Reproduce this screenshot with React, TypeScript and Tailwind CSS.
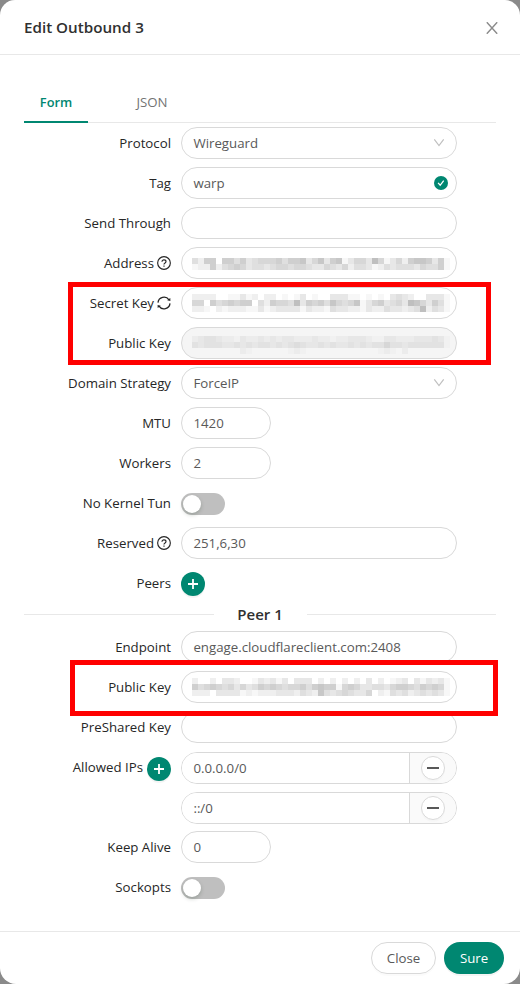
import type { ReactNode } from "react";

// Each digit is the darkness of one 6px block of a censored value.
const ADDRESS = [
  "426606646345556" + "4667357367135538513526776361",
  "122624565344345" + "5455433543524431243444354461",
];
const SECRET = [
  "222200113120220" + "1013010033311010103432003331",
  "550645656604265" + "5483656475457135634538753641",
  "221021222113123" + "3331322143322132243323482431",
];
const PUBLIC = [
  "234432213223232" + "3322232212233321133222333431",
  "434443343434434" + "3454334343343434464434444441",
  "000000002100000" + "0121000000000000121020000000",
];
const PEER_PUBLIC = [
  "200203320013231" + "3033302020202030201230313231",
  "645654535346565" + "4556467661565334435665465651",
  "222033331212223" + "3324327434543350214342343431",
];

const SHADES = ["none", "#f7f7f7", "#efefef", "#e7e7e7", "#dfdfdf", "#d7d7d7", "#cfcfcf", "#c7c7c7", "#bfbfbf"];
const MUTED_SHADES = ["none", "#f1f1f1", "#ececec", "#e7e7e7", "#e2e2e2", "#dddddd", "#d7d7d7", "#d0d0d0", "#cccccc"];

function Mosaic({ rows, muted = false, offset = "" }: { rows: string[]; muted?: boolean; offset?: string }) {
  const shades = muted ? MUTED_SHADES : SHADES;
  return (
    <svg width="258" height={rows.length * 6} shapeRendering="crispEdges" className={`-ml-0.5 shrink-0 ${offset}`}>
      {rows.map((row, y) =>
        row.split("").map((d, x) => (
          <rect key={`${x}-${y}`} x={x * 6} y={y * 6} width="6" height="6" fill={shades[Number(d)]} />
        )),
      )}
    </svg>
  );
}

function Row({ label, icon, children, labelPad = "pt-0.5" }: { label?: string; icon?: ReactNode; children: ReactNode; labelPad?: string }) {
  return (
    <div className="flex h-8 items-center gap-2.5">
      <div className="flex w-[147px] shrink-0 items-center justify-end gap-[3px] whitespace-nowrap text-[#262626]">
        {label && <span className={labelPad}>{label}</span>}
        {icon}
      </div>
      {children}
    </div>
  );
}

function Field({ text, children, className = "w-[276px]", bg = "bg-white" }: { text?: string; children?: ReactNode; className?: string; bg?: string }) {
  return (
    <div className={`flex h-8 shrink-0 items-center whitespace-nowrap rounded-full border border-[#d9d9d9] pl-3 ${className} ${bg}`}>
      {text && <span className="-ml-[0.6px] pt-0.5">{text}</span>}
      {children}
    </div>
  );
}

const Help = () => (
  <svg width="14" height="14" viewBox="0 0 14 14" fill="none" stroke="#262626" strokeWidth="1.15">
    <circle cx="7" cy="7" r="6.35" />
    <path d="M5 5.7C5 4.5 5.8 3.8 7 3.8s2 .7 2 1.8c0 .9-.6 1.3-1.2 1.6-.6.3-.8.6-.8 1.3" />
    <path d="M7 9.5v1.2" />
  </svg>
);

const Sync = () => (
  <svg width="14" height="14" viewBox="0 0 14 14" fill="none" stroke="#262626" strokeWidth="1.3">
    <path d="M1 6.6A6 6 0 0 1 12 3.9M13 7.4A6 6 0 0 1 2 10.1" />
    <path d="m10.2 4.3 3.2.7-.1-3ZM3.8 9.7.6 9l.1 3Z" fill="#262626" stroke="none" />
  </svg>
);

const Chevron = () => (
  <svg className="ml-auto mr-[11px]" width="12" height="12" viewBox="0 0 12 12" fill="none" stroke="#bfbfbf" strokeWidth="1.2">
    <path d="m1.3 2.3 4.7 6.2 4.7-6.2" />
  </svg>
);

const AddButton = () => (
  <div className="mt-0.5 flex size-6 items-center justify-center rounded-full bg-[#008771] shadow-[0_2px_0_rgba(0,0,0,0.045)]">
    <svg width="12" height="12" viewBox="0 0 12 12" stroke="#fff" strokeWidth="1.8">
      <path d="M6 1v10M1 6h10" />
    </svg>
  </div>
);

const Toggle = () => (
  <div className="mt-0.5 flex h-[22px] w-11 items-center rounded-full bg-[#bfbfbf] p-0.5">
    <div className="size-[18px] rounded-full bg-white shadow-[0_2px_4px_rgba(0,35,11,0.2)]" />
  </div>
);

function AllowedIp({ value }: { value: string }) {
  return (
    <div className="flex h-8 w-[276px] overflow-hidden rounded-full border border-[#d9d9d9]">
      <div className="flex w-[228px] items-center border-r border-[#d9d9d9] bg-white pl-3">
        <span className="-ml-[0.6px] pt-0.5">{value}</span>
      </div>
      <div className="flex flex-1 items-center justify-center bg-[#fafafa]">
        <div className="flex size-6 items-center justify-center rounded-full border border-[#d9d9d9] bg-white shadow-[0_2px_0_rgba(0,0,0,0.015)]">
          <div className="h-0.5 w-3 bg-[#595959]" />
        </div>
      </div>
    </div>
  );
}

export default function App() {
  return (
    <div className="h-[984px] w-[520px] bg-[#8a8a8a] text-[13.25px] text-[#595959]" style={{ fontFamily: '"Open Sans", "Noto Sans", sans-serif' }}>
      <div className="relative flex h-full flex-col overflow-hidden rounded-b-2xl rounded-t-[15px] bg-white">
        <header className="flex h-[55px] shrink-0 items-center justify-between border-b border-[#e8e8e8] pl-6 pr-[22px]">
          <h1 className="text-[15.2px] font-semibold text-[#303030]">Edit Outbound 3</h1>
          <svg className="mt-0.5" width="12" height="12" viewBox="0 0 12 12" fill="none" stroke="#8c8c8c" strokeWidth="1.4">
            <path d="m.8.2 10.4 11.6M11.2.2.8 11.8" />
          </svg>
        </header>

        <main className="flex-1 px-6 pt-7">
          <nav className="flex h-10 border-b border-[#e8e8e8]">
            <div className="-mb-px flex w-16 items-center justify-center border-b-2 border-[#008771] pt-0.5 text-[12.8px] font-semibold text-[#008771]">Form</div>
            <div className="ml-8 flex w-16 items-center justify-center pt-px text-[#737373]">JSON</div>
          </nav>

          <section className="mt-1 flex flex-col gap-2">
            <Row label="Protocol"><Field text="Wireguard"><Chevron /></Field></Row>
            <Row label="Tag">
              <Field text="warp">
                <svg className="ml-auto mr-[8px]" width="14" height="14" viewBox="0 0 14 14">
                  <circle cx="7" cy="7" r="7" fill="#008771" />
                  <path d="m4.1 6.9 2.1 2.4 3.5-4.6" fill="none" stroke="#fff" strokeWidth="1.3" />
                </svg>
              </Field>
            </Row>
            <Row label="Send Through"><Field /></Row>
            <Row label="Address" icon={<Help />}><Field><Mosaic rows={ADDRESS} offset="mt-0.5" /></Field></Row>
            <Row label="Secret Key" icon={<Sync />}><Field><Mosaic rows={SECRET} /></Field></Row>
            <Row label="Public Key"><Field bg="bg-[#f5f5f5]"><Mosaic rows={PUBLIC} muted offset="mt-1" /></Field></Row>
            <Row label="Domain Strategy"><Field text="ForceIP"><Chevron /></Field></Row>
            <Row label="MTU"><Field className="w-[90px]" text="1420" /></Row>
            <Row label="Workers"><Field className="w-[90px]" text="2" /></Row>
            <Row label="No Kernel Tun"><Toggle /></Row>
            <Row label="Reserved" icon={<Help />}><Field text="251,6,30" /></Row>
            <Row label="Peers"><AddButton /></Row>
          </section>

          <div className="mt-[3px] flex h-6 items-center gap-6">
            <div className="h-px flex-1 bg-[#e8e8e8]" />
            <div className="flex w-[45px] justify-center whitespace-nowrap pt-px text-[15px] font-semibold text-[#303030]">Peer 1</div>
            <div className="h-px flex-1 bg-[#e8e8e8]" />
          </div>

          <section className="mt-[5px] flex flex-col gap-2">
            <Row label="Endpoint"><Field text="engage.cloudflareclient.com:2408" /></Row>
            <Row label="Public Key"><Field><Mosaic rows={PEER_PUBLIC} /></Field></Row>
            <Row label="PreShared Key"><Field /></Row>
            <div className="mt-px flex flex-col gap-2">
              <Row label="Allowed IPs" icon={<AddButton />} labelPad="pr-px"><AllowedIp value="0.0.0.0/0" /></Row>
              <Row><AllowedIp value="::/0" /></Row>
            </div>
            <div className="-mt-px flex flex-col gap-2">
              <Row label="Keep Alive"><Field className="w-[90px]" text="0" /></Row>
              <Row label="Sockopts"><Toggle /></Row>
            </div>
          </section>
        </main>

        <footer className="flex h-[53px] shrink-0 justify-end gap-2 border-t border-[#e8e8e8] pr-4 pt-2.5">
          <div className="flex h-8 w-[65px] items-center justify-center rounded-full border border-[#d9d9d9] pt-0.5 shadow-[0_2px_0_rgba(0,0,0,0.015)]">Close</div>
          <div className="flex h-8 w-[60px] items-center justify-center rounded-full bg-[#008771] pt-0.5 text-white shadow-[0_2px_0_rgba(0,0,0,0.045)]">Sure</div>
        </footer>

        <div className="absolute left-[68px] top-[282px] h-[83px] w-[423px] border-[5px] border-[#ff0000]" />
        <div className="absolute left-[70px] top-[660px] h-14 w-[428px] border-[5px] border-[#ff0000]" />
      </div>
    </div>
  );
}
